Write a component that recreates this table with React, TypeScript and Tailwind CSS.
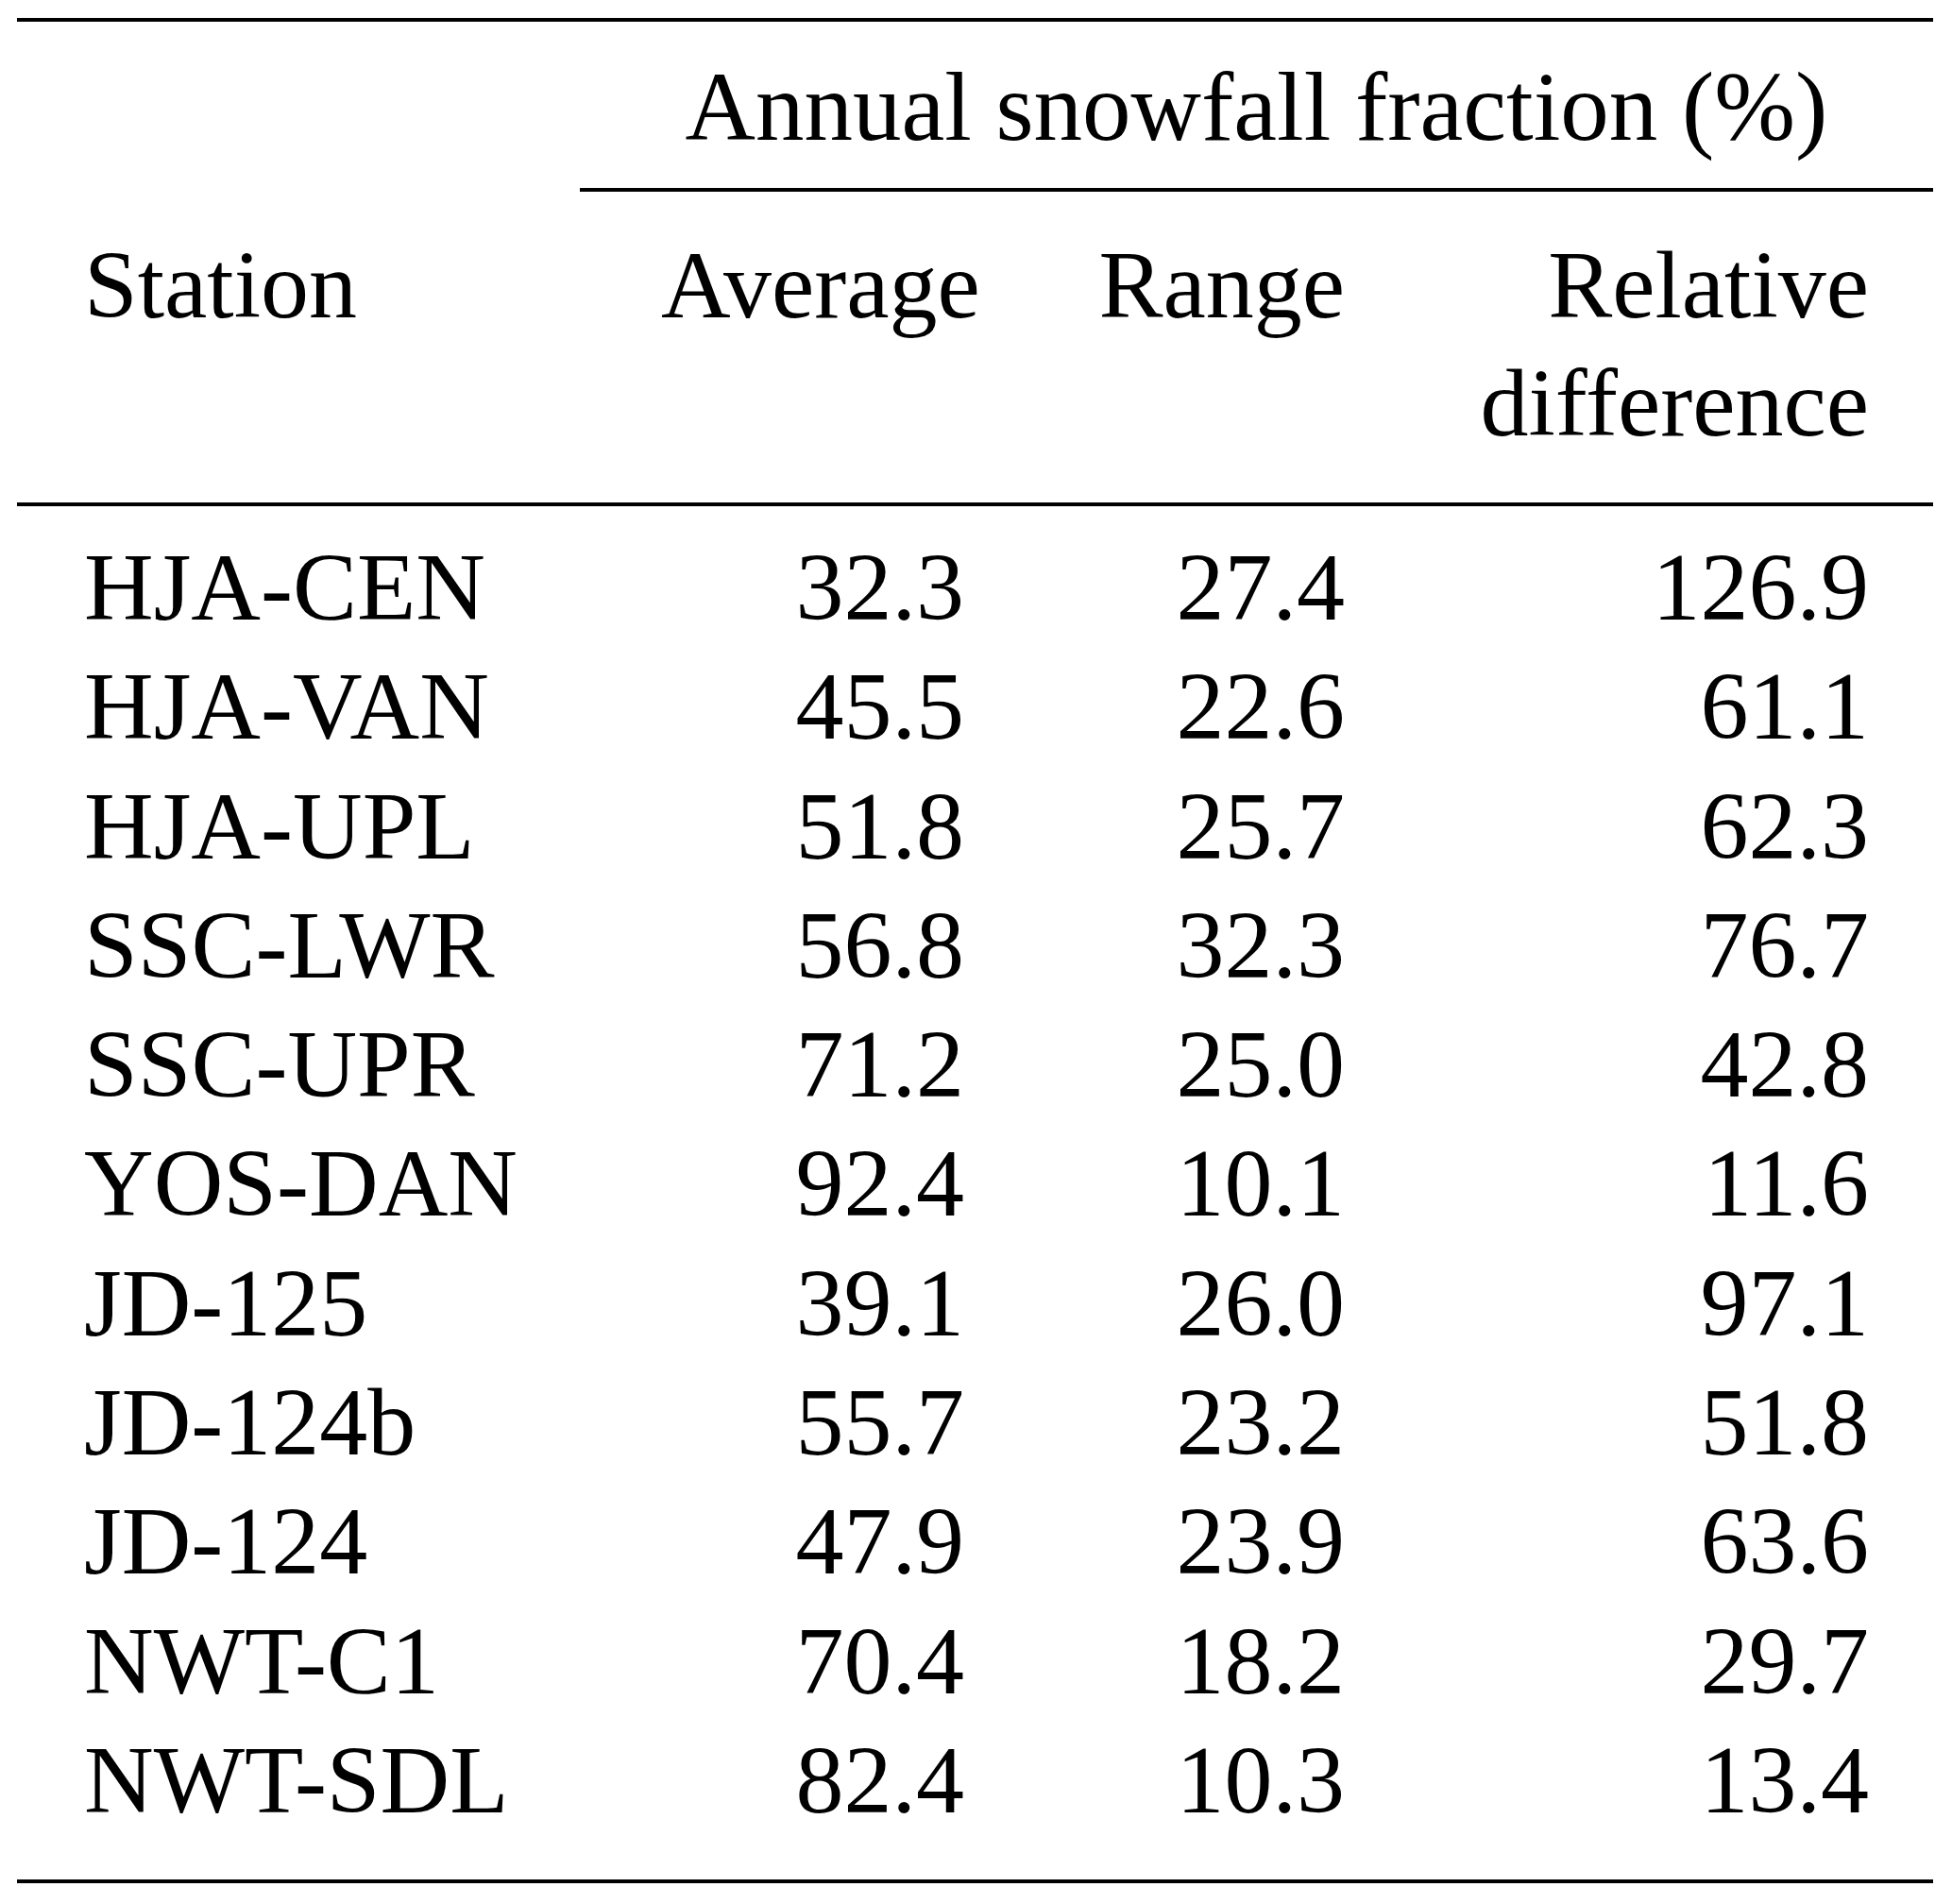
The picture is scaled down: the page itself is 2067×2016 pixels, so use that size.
import React from "react";

const rows: [string, string, string, string][] = [
  ["HJA-CEN", "32.3", "27.4", "126.9"],
  ["HJA-VAN", "45.5", "22.6", "61.1"],
  ["HJA-UPL", "51.8", "25.7", "62.3"],
  ["SSC-LWR", "56.8", "32.3", "76.7"],
  ["SSC-UPR", "71.2", "25.0", "42.8"],
  ["YOS-DAN", "92.4", "10.1", "11.6"],
  ["JD-125", "39.1", "26.0", "97.1"],
  ["JD-124b", "55.7", "23.2", "51.8"],
  ["JD-124", "47.9", "23.9", "63.6"],
  ["NWT-C1", "70.4", "18.2", "29.7"],
  ["NWT-SDL", "82.4", "10.3", "13.4"],
];

export default function App() {
  return (
    <div className="w-[2067px] h-[2016px] bg-white text-black text-[102px] font-['Liberation_Serif','Times_New_Roman',serif]">
      <div className="ml-[18px] w-[2029px] pt-[19px] flex flex-col">
        <div className="h-[4px] bg-black" />
        <div className="mt-[27px] ml-[596px] h-[126px] leading-[126px] text-center whitespace-nowrap">
          <span className="inline-block text-[103px]">Annual snowfall fraction (%)</span>
        </div>
        <div className="mt-[23px] ml-[596px] h-[4px] bg-black" />
        <div className="mt-[36px] grid grid-cols-[611px_321px_403px_555px] pl-[71px] pr-[68px] leading-[125px]">
          <div className="text-left">Station</div>
          <div className="text-right">Average</div>
          <div className="text-right">Range</div>
          <div className="text-right">
            Relative
            <br />
            difference
          </div>
        </div>
        <div className="mt-[43px] h-[4px] bg-black" />
        <div className="mt-[23px] flex flex-col leading-[126.3px]">
          {rows.map((r) => (
            <div
              key={r[0]}
              className="grid grid-cols-[611px_321px_403px_555px] pl-[71px] pr-[68px]"
            >
              <div className="text-left whitespace-nowrap">{r[0]}</div>
              <div className="text-right">{r[1]}</div>
              <div className="text-right">{r[2]}</div>
              <div className="text-right">{r[3]}</div>
            </div>
          ))}
        </div>
        <div className="mt-[42px] h-[4px] bg-black" />
      </div>
    </div>
  );
}
